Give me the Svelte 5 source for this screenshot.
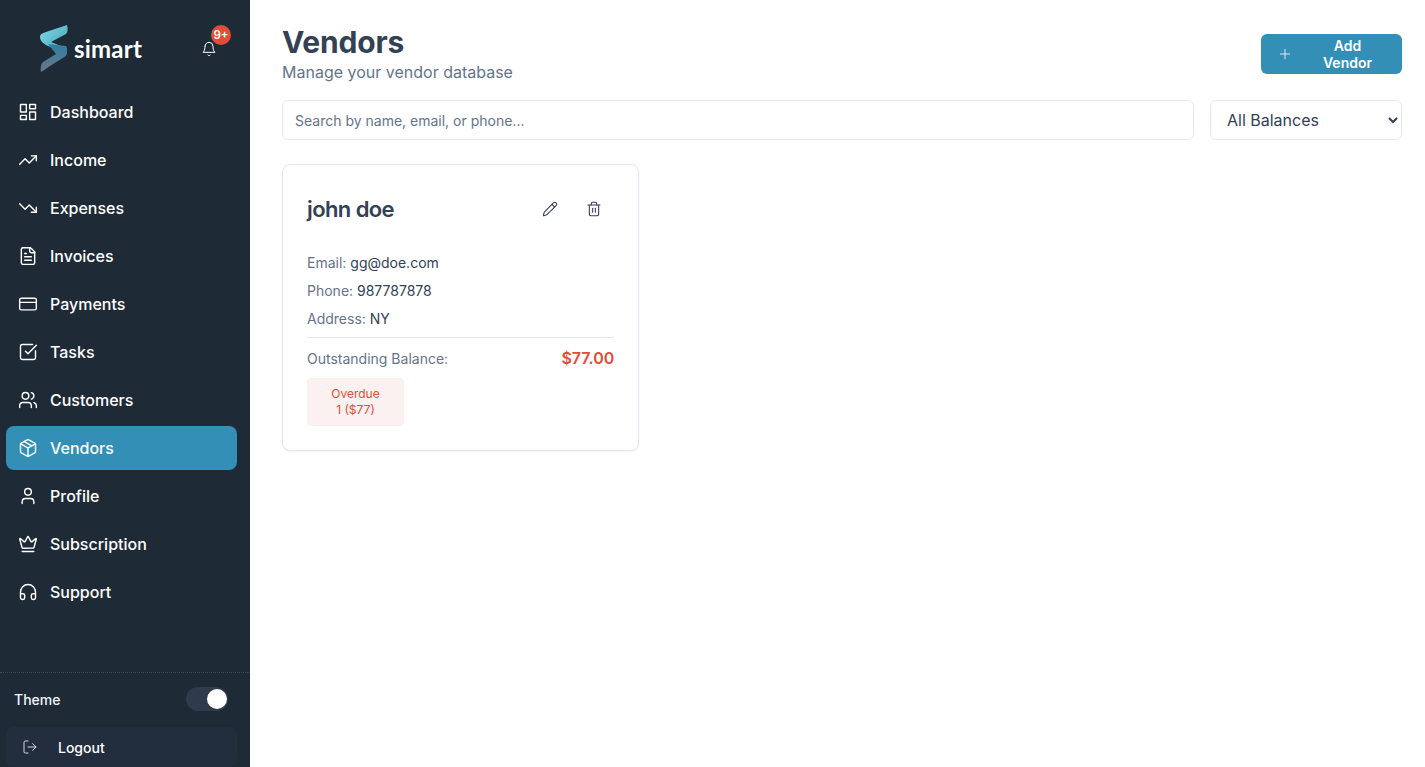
<script>
  const nav = [
    { label: 'Dashboard', d: ['M3 3h7v9H3z', 'M14 3h7v5h-7z', 'M14 12h7v9h-7z', 'M3 16h7v5H3z'] },
    { label: 'Income', d: ['M22 7l-8.5 8.5-5-5L2 17', 'M16 7h6v6'] },
    { label: 'Expenses', d: ['M22 17l-8.5-8.5-5 5L2 7', 'M16 17h6v-6'] },
    { label: 'Invoices', d: ['M15 2H6a2 2 0 0 0-2 2v16a2 2 0 0 0 2 2h12a2 2 0 0 0 2-2V7z', 'M14 2v4a2 2 0 0 0 2 2h4', 'M10 9H8', 'M16 13H8', 'M16 17H8'] },
    { label: 'Payments', d: ['M4 5h16a2 2 0 0 1 2 2v10a2 2 0 0 1-2 2H4a2 2 0 0 1-2-2V7a2 2 0 0 1 2-2z', 'M2 10h20'] },
    { label: 'Tasks', d: ['M21 10.5V19a2 2 0 0 1-2 2H5a2 2 0 0 1-2-2V5a2 2 0 0 1 2-2h12.5', 'M9 11l3 3L22 4'] },
    { label: 'Customers', d: ['M16 21v-2a4 4 0 0 0-4-4H6a4 4 0 0 0-4 4v2', 'M9 3a4 4 0 1 0 0 8 4 4 0 0 0 0-8z', 'M22 21v-2a4 4 0 0 0-3-3.87', 'M16 3.13a4 4 0 0 1 0 7.75'] },
    { label: 'Vendors', d: ['M11 21.73a2 2 0 0 0 2 0l7-4A2 2 0 0 0 21 16V8a2 2 0 0 0-1-1.73l-7-4a2 2 0 0 0-2 0l-7 4A2 2 0 0 0 3 8v8a2 2 0 0 0 1 1.73z', 'M12 22V12', 'M3.3 7L12 12l8.7-5', 'M7.5 4.27l9 5.15'], active: true },
    { label: 'Profile', d: ['M19 21v-2a4 4 0 0 0-4-4H9a4 4 0 0 0-4 4v2', 'M12 3a4 4 0 1 0 0 8 4 4 0 0 0 0-8z'] },
    { label: 'Subscription', d: ['M11.56 3.27a.5.5 0 0 1 .88 0l2.95 5.6a1 1 0 0 0 1.52.3l4.28-3.66a.5.5 0 0 1 .8.5l-2.84 10.25a1 1 0 0 1-.96.74H5.81a1 1 0 0 1-.96-.74L2.01 6a.5.5 0 0 1 .8-.5l4.28 3.67a1 1 0 0 0 1.52-.3z', 'M5 21h14'] },
    { label: 'Support', d: ['M3 14h3a2 2 0 0 1 2 2v3a2 2 0 0 1-2 2H5a2 2 0 0 1-2-2v-7a9 9 0 0 1 18 0v7a2 2 0 0 1-2 2h-1a2 2 0 0 1-2-2v-3a2 2 0 0 1 2-2h3'] }
  ];
</script>

<div class="shell">
  <aside class="sidebar">
    <div class="brand">
      <div class="logo">
        <svg width="30" height="50" viewBox="0 0 30 50" aria-hidden="true">
          <defs>
            <linearGradient id="lg1" x1="0" y1="0" x2="1" y2="1">
              <stop offset="0" stop-color="#7fdbe2" />
              <stop offset="1" stop-color="#3f9fb8" />
            </linearGradient>
            <linearGradient id="lg2" x1="0" y1="0" x2="0" y2="1">
              <stop offset="0" stop-color="#2f7fa6" />
              <stop offset="1" stop-color="#6b7683" />
            </linearGradient>
          </defs>
          <path d="M27 1 C28 5 28 8 26 10 L11 18 L26 24 L27 30 L8 22 C2 19 0 16 0 13 C0 10 3 9 6 8 Z" fill="url(#lg1)" />
          <path d="M8 20 L26 22 C28 24 27 30 26 32 L10 42 C6 45 3 47 1 48 C0 44 1 40 3 38 L16 30 Z" fill="url(#lg2)" />
        </svg>
        <span class="logo-word">simart</span>
      </div>
      <div class="bell">
        <svg class="icon bell-icon" viewBox="0 0 24 24"><path d="M6 8a6 6 0 0 1 12 0c0 7 3 9 3 9H3s3-2 3-9" /><path d="M10.3 21a1.94 1.94 0 0 0 3.4 0" /></svg>
        <span class="badge">9+</span>
      </div>
    </div>

    <nav class="nav">
      {#each nav as item}
        <a class="nav-item" class:active={item.active} href="#top">
          <svg class="icon" viewBox="0 0 24 24">
            {#each item.d as d}<path {d} />{/each}
          </svg>
          <span>{item.label}</span>
        </a>
      {/each}
    </nav>

    <div class="foot">
      <div class="theme">
        <span>Theme</span>
        <span class="toggle"><span class="knob"></span></span>
      </div>
      <button class="logout" type="button">
        <svg class="icon small" viewBox="0 0 24 24"><path d="M9 21H5a2 2 0 0 1-2-2V5a2 2 0 0 1 2-2h4" /><path d="M16 17l5-5-5-5" /><path d="M21 12H9" /></svg>
        <span>Logout</span>
      </button>
    </div>
  </aside>

  <main class="main">
    <header class="head">
      <div>
        <h1>Vendors</h1>
        <p>Manage your vendor database</p>
      </div>
      <button class="add" type="button">
        <svg class="icon plus" viewBox="0 0 24 24"><path d="M5 12h14" /><path d="M12 5v14" /></svg>
        <span>Add Vendor</span>
      </button>
    </header>

    <div class="filters">
      <input class="search" type="text" placeholder="Search by name, email, or phone..." />
      <select class="balance">
        <option>All Balances</option>
      </select>
    </div>

    <div class="grid">
      <article class="card">
        <div class="card-head">
          <h2>john doe</h2>
          <div class="actions">
            <svg class="icon act" viewBox="0 0 24 24"><path d="M21.17 6.81a2.83 2.83 0 0 0-4-4L3.84 16.17a2 2 0 0 0-.5.83l-1.32 4.35a.5.5 0 0 0 .62.62l4.35-1.32a2 2 0 0 0 .83-.5z" /><path d="M15 5l4 4" /></svg>
            <svg class="icon act" viewBox="0 0 24 24"><path d="M3 6h18" /><path d="M19 6v14a2 2 0 0 1-2 2H7a2 2 0 0 1-2-2V6" /><path d="M8 6V4a2 2 0 0 1 2-2h4a2 2 0 0 1 2 2v2" /><path d="M10 11v6" /><path d="M14 11v6" /></svg>
          </div>
        </div>
        <div class="details">
          <p><span>Email:</span> gg@doe.com</p>
          <p><span>Phone:</span> 987787878</p>
          <p><span>Address:</span> NY</p>
        </div>
        <div class="balance-row">
          <span>Outstanding Balance:</span>
          <strong>$77.00</strong>
        </div>
        <div class="overdue">
          <span>Overdue</span>
          <span>1 ($77)</span>
        </div>
      </article>
    </div>
  </main>
</div>

<style>
  :global(body) {
    margin: 0;
    background: #fff;
    font-family: Inter, "Liberation Sans", sans-serif;
  }
  .shell {
    display: flex;
    height: 767px;
    overflow: hidden;
  }
  .sidebar {
    width: 250px;
    flex: none;
    background: #1f2a37;
    color: #fff;
    display: flex;
    flex-direction: column;
  }
  .brand {
    height: 90px;
    display: flex;
    align-items: flex-start;
    justify-content: space-between;
    padding: 0 21px 0 40px;
    box-sizing: border-box;
  }
  .logo {
    display: flex;
    align-items: center;
    gap: 0;
    margin-top: 24px;
  }
  .logo-word {
    font-family: Lato, Inter, sans-serif;
    font-size: 24px;
    font-weight: 700;
    line-height: 50px;
    margin-left: 4px;
    letter-spacing: 0.2px;
  }
  .bell {
    position: relative;
    width: 28px;
    height: 40px;
    margin-top: 29px;
  }
  .icon {
    width: 20px;
    height: 20px;
    fill: none;
    stroke: currentColor;
    stroke-width: 1.7;
    stroke-linecap: round;
    stroke-linejoin: round;
    flex: none;
  }
  .bell-icon {
    width: 16px;
    height: 16px;
    position: absolute;
    left: 0;
    top: 12px;
    stroke-width: 1.5;
  }
  .badge {
    position: absolute;
    left: 10px;
    top: -4px;
    width: 20px;
    height: 20px;
    border-radius: 50%;
    background: #e14d36;
    font-size: 11.5px;
    font-weight: 600;
    line-height: 20px;
    text-align: center;
  }
  .nav {
    display: flex;
    flex-direction: column;
    gap: 4px;
    padding: 0 13px 0 6px;
  }
  .nav-item {
    display: flex;
    align-items: center;
    gap: 12px;
    height: 44px;
    padding: 0 12px;
    border-radius: 8px;
    color: #fff;
    font-size: 16px;
    font-weight: 500;
    text-decoration: none;
  }
  .nav-item.active {
    background: #348fb6;
  }
  .foot {
    margin-top: auto;
    border-top: 1px dotted #3b4856;
    padding: 0 13px 0 6px;
  }
  .theme {
    display: flex;
    align-items: center;
    justify-content: space-between;
    height: 52px;
    padding: 0 9px 0 8px;
    font-size: 14px;
    font-weight: 500;
    color: #f3f4f6;
  }
  .toggle {
    width: 42px;
    height: 24px;
    border-radius: 12px;
    background: #2f3b4c;
    display: flex;
    align-items: center;
    justify-content: flex-end;
    padding-right: 0;
  }
  .knob {
    width: 20px;
    height: 20px;
    border-radius: 50%;
    background: #fff;
    margin-right: 1px;
  }
  .logout {
    width: 100%;
    height: 40px;
    border: 0;
    border-radius: 8px;
    background: #222d3e;
    color: #fff;
    display: flex;
    align-items: center;
    gap: 20px;
    padding: 0 16px;
    font: 500 14px Inter, sans-serif;
    margin-top: 2px;
  }
  .small {
    width: 16px;
    height: 16px;
    stroke-width: 1.5;
    color: #d6dae0;
  }
  .main {
    flex: 1;
    min-width: 0;
    padding: 24px 23px 0 32px;
  }
  .head {
    display: flex;
    justify-content: space-between;
    align-items: center;
    height: 60px;
    margin-bottom: 16px;
  }
  h1 {
    margin: 0;
    font-size: 30px;
    line-height: 36px;
    font-weight: 700;
    color: #334155;
    letter-spacing: -0.2px;
  }
  .head p {
    margin: 0;
    font-size: 16px;
    line-height: 24px;
    color: #64748b;
  }
  .add {
    display: flex;
    align-items: center;
    gap: 16px;
    width: 141px;
    height: 40px;
    box-sizing: border-box;
    padding: 0 16px;
    border: 0;
    border-radius: 6px;
    background: #348fb6;
    color: #fff;
    font: 600 14px Inter, sans-serif;
  }
  .plus {
    width: 16px;
    height: 16px;
    stroke-width: 1.5;
    color: #d7e9f1;
  }
  .filters {
    display: flex;
    gap: 16px;
    margin-bottom: 24px;
  }
  .search {
    flex: 1;
    min-width: 0;
    height: 40px;
    box-sizing: border-box;
    padding: 0 12px;
    border: 1px solid #e2e8f0;
    border-radius: 6px;
    font: 400 14px Inter, sans-serif;
    color: #334155;
    outline: none;
  }
  .search::placeholder {
    color: #64748b;
    opacity: 1;
  }
  .balance {
    width: 192px;
    flex: none;
    height: 40px;
    box-sizing: border-box;
    padding: 0 12px;
    border: 1px solid #e2e8f0;
    border-radius: 6px;
    background: #fff;
    font: 400 16px Inter, sans-serif;
    color: #334155;
  }
  .grid {
    display: grid;
    grid-template-columns: repeat(3, 1fr);
    gap: 24px;
  }
  .card {
    height: 287px;
    box-sizing: border-box;
    padding: 24px;
    border: 1px solid #e2e8f0;
    border-radius: 8px;
    background: #fff;
    box-shadow: 0 1px 2px rgba(15, 23, 42, 0.05);
  }
  .card-head {
    display: flex;
    align-items: center;
    justify-content: space-between;
    height: 40px;
    margin-bottom: 20px;
  }
  h2 {
    margin: 0;
    font-size: 22px;
    font-weight: 600;
    color: #334155;
    letter-spacing: -0.6px;
  }
  .actions {
    display: flex;
    gap: 28px;
    padding-right: 12px;
    color: #334155;
  }
  .act {
    width: 16px;
    height: 16px;
    stroke-width: 1.6;
  }
  .details p {
    margin: 0;
    height: 28px;
    font-size: 14px;
    line-height: 28px;
    color: #334155;
  }
  .details span {
    color: #64748b;
  }
  .details {
    padding-bottom: 4px;
    border-bottom: 1px solid #e2e8f0;
  }
  .balance-row {
    display: flex;
    align-items: center;
    justify-content: space-between;
    height: 40px;
    font-size: 14px;
    color: #64748b;
  }
  .balance-row strong {
    font-size: 16px;
    font-weight: 600;
    color: #e14d36;
  }
  .overdue {
    width: 97px;
    height: 48px;
    display: flex;
    flex-direction: column;
    justify-content: center;
    align-items: center;
    border-radius: 4px;
    background: #fbf1f0;
    color: #e14d36;
    font-size: 12px;
    line-height: 16px;
  }
</style>
